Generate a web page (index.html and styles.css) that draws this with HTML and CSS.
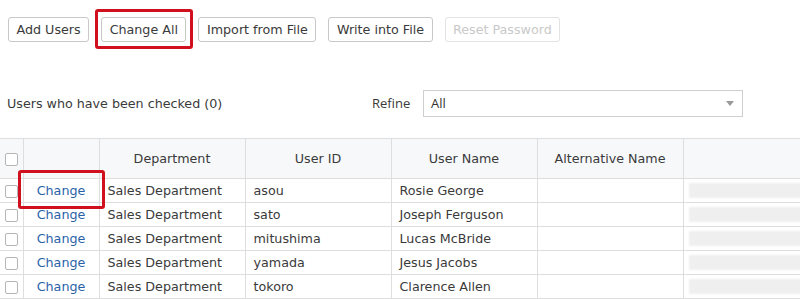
FILE: index.html
```html
<!DOCTYPE html>
<html>
<head>
<meta charset="utf-8">
<link rel="stylesheet" href="styles.css">
</head>
<body>
<div class="toolbar">
  <button class="btn">Add Users</button>
  <button class="btn marked">Change All</button>
  <button class="btn">Import from File</button>
  <button class="btn">Write into File</button>
  <button class="btn disabled">Reset Password</button>
</div>
<div class="filter-row">
  <div class="checked-count">Users who have been checked (0)</div>
  <div class="refine">
    <span class="refine-label">Refine</span>
    <div class="select"><span>All</span><span class="caret"></span></div>
  </div>
</div>
<table class="grid">
  <colgroup>
    <col class="c-check"><col class="c-change"><col class="c-w"><col class="c-w"><col class="c-w"><col class="c-w"><col class="c-last">
  </colgroup>
  <thead>
    <tr>
      <th><span class="cb"></span></th>
      <th></th>
      <th>Department</th>
      <th>User ID</th>
      <th>User Name</th>
      <th>Alternative Name</th>
      <th></th>
    </tr>
  </thead>
  <tbody>
    <tr><td><span class="cb"></span></td><td class="link marked-cell">Change</td><td>Sales Department</td><td>asou</td><td>Rosie George</td><td></td><td><div class="blur"></div></td></tr>
    <tr><td><span class="cb"></span></td><td class="link">Change</td><td>Sales Department</td><td>sato</td><td>Joseph Ferguson</td><td></td><td><div class="blur"></div></td></tr>
    <tr><td><span class="cb"></span></td><td class="link">Change</td><td>Sales Department</td><td>mitushima</td><td>Lucas McBride</td><td></td><td><div class="blur"></div></td></tr>
    <tr><td><span class="cb"></span></td><td class="link">Change</td><td>Sales Department</td><td>yamada</td><td>Jesus Jacobs</td><td></td><td><div class="blur"></div></td></tr>
    <tr><td><span class="cb"></span></td><td class="link">Change</td><td>Sales Department</td><td>tokoro</td><td>Clarence Allen</td><td></td><td><div class="blur"></div></td></tr>
  </tbody>
</table>
</body>
</html>
```
FILE: styles.css
```css
html, body {
  margin: 0;
  padding: 0;
  background: #fff;
  overflow: hidden;
}
body {
  font-family: "DejaVu Sans", Verdana, sans-serif;
  font-size: 12.7px;
  line-height: 15px;
  color: #3a3a3a;
  width: 800px;
  height: 299px;
}
.toolbar {
  display: flex;
  gap: 12px;
  padding: 17px 0 0 8px;
  height: 25px;
}
.btn {
  position: relative;
  font-family: inherit;
  font-size: 12.7px;
  color: #3a3a3a;
  background: #fff;
  border: 1px solid #c8c8c8;
  border-radius: 3px;
  height: 25px;
  padding: 0 7.5px;
  margin: 0;
}
.btn.disabled {
  color: #c9c9c9;
  border-color: #e3e3e3;
}
.marked::after {
  content: "";
  position: absolute;
  left: -7px;
  right: -8px;
  top: -9px;
  bottom: -8px;
  border: 3px solid #d0101e;
  border-radius: 3px;
}
.filter-row {
  display: flex;
  align-items: center;
  margin-top: 48px;
  height: 27px;
}
.checked-count {
  padding-left: 7px;
  width: 365px;
}
.refine {
  display: flex;
  align-items: center;
}
.refine-label {
  font-family: "Open Sans", sans-serif;
  font-size: 13px;
  width: 51px;
}
.select {
  box-sizing: border-box;
  width: 320px;
  height: 27px;
  border: 1px solid #cfcfcf;
  display: flex;
  align-items: center;
  justify-content: space-between;
  padding: 0 8px 0 7px;
  font-family: "Open Sans", sans-serif;
  font-size: 13px;
  color: #333;
}
.caret {
  width: 0;
  height: 0;
  border-left: 4px solid transparent;
  border-right: 4px solid transparent;
  border-top: 5px solid #999;
}
.grid {
  margin-top: 21px;
  border-collapse: collapse;
  table-layout: fixed;
  width: 830px;
}
.c-check { width: 23px; }
.c-change { width: 76px; }
.c-w { width: 146px; }
.c-last { width: 147px; }
.grid th, .grid td {
  border: 1px solid #dedede;
  padding: 0 8px;
  white-space: nowrap;
  overflow: visible;
}
.grid th {
  background: #f7f8fa;
  font-weight: normal;
  height: 39px;
  text-align: center;
}
.grid td {
  height: 23px;
}
.grid tr > :first-child {
  padding: 0 0 0 5px;
  border-left: none;
}
.grid th:first-child { text-align: left; }
.cb {
  display: inline-block;
  box-sizing: border-box;
  width: 13px;
  height: 13px;
  border: 1px solid #b5b5b5;
  border-radius: 2px;
  background: #fff;
  vertical-align: middle;
}
.grid td.link {
  color: #2a62a8;
  text-align: center;
  padding: 0;
}
.marked-cell {
  position: relative;
}
.marked-cell::after {
  content: "";
  position: absolute;
  left: -6px;
  right: -6px;
  top: -9px;
  bottom: -7px;
  border: 3px solid #d0101e;
  border-radius: 3px;
  z-index: 2;
}
.grid td:last-child {
  padding: 0 0 0 5px;
}
.blur {
  height: 15px;
  background: #efefef;
  filter: blur(1px);
}
```
